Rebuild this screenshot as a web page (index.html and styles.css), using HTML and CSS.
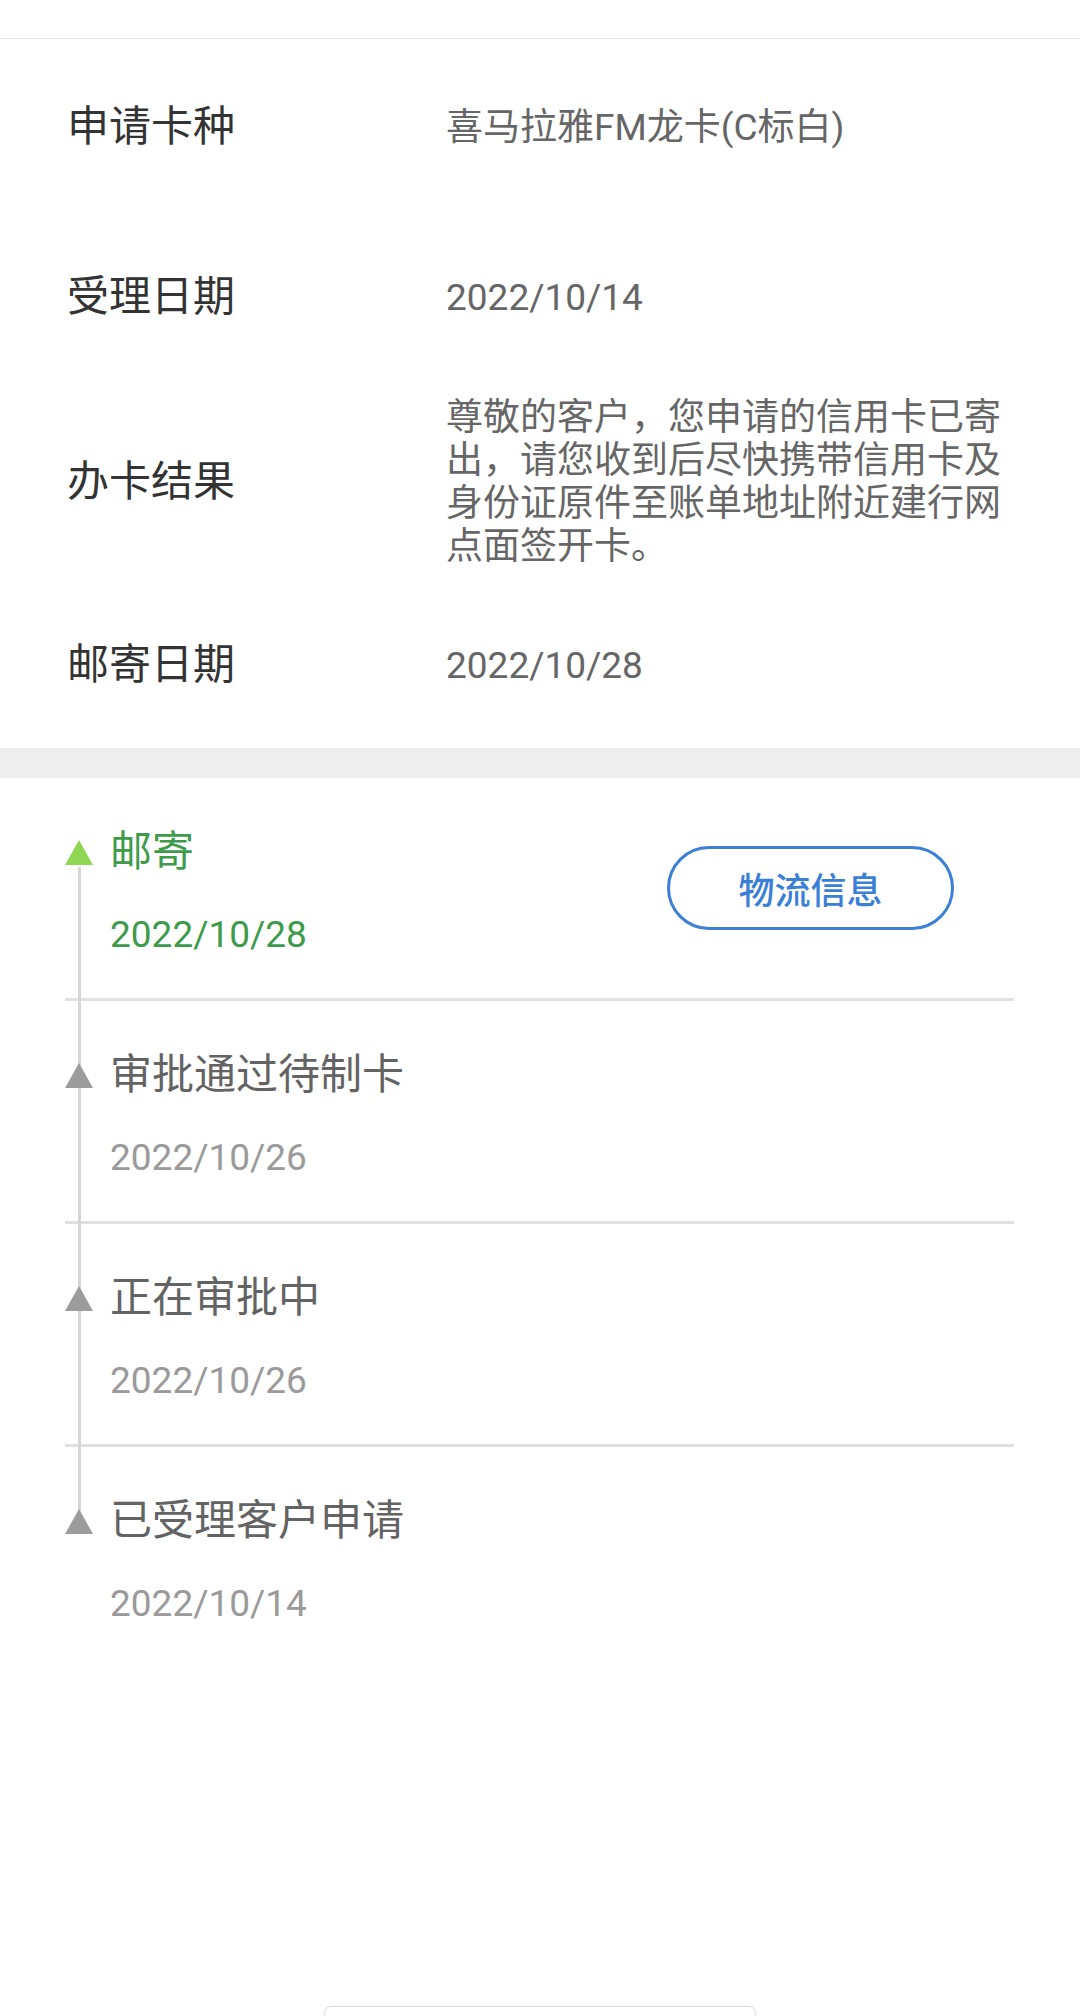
FILE: index.html
```html
<!DOCTYPE html>
<html lang="zh-CN">
<head>
<meta charset="utf-8">
<title>办卡进度</title>
<link rel="stylesheet" href="styles.css">
</head>
<body>
<div class="page">
  <div class="header"></div>

  <section class="info">
    <div class="row">
      <div class="label">申请卡种</div>
      <div class="value">喜马拉雅FM龙卡(C标白)</div>
    </div>
    <div class="row">
      <div class="label">受理日期</div>
      <div class="value">2022/10/14</div>
    </div>
    <div class="row row-multi">
      <div class="label">办卡结果</div>
      <div class="value">尊敬的客户，您申请的信用卡已寄出，请您收到后尽快携带信用卡及身份证原件至账单地址附近建行网点面签开卡。</div>
    </div>
    <div class="row row-last">
      <div class="label">邮寄日期</div>
      <div class="value">2022/10/28</div>
    </div>
  </section>

  <div class="band"></div>

  <section class="timeline">
    <div class="item item-active">
      <div class="step">
        <div class="marker">
          <svg width="28" height="25" viewBox="0 0 28 25"><polygon points="14,0 28,25 0,25" fill="#8fd653"/></svg>
        </div>
        <div class="texts">
          <div class="title">邮寄</div>
          <div class="date">2022/10/28</div>
        </div>
      </div>
      <button class="btn">物流信息</button>
    </div>
    <div class="item">
      <div class="step">
        <div class="marker">
          <svg width="28" height="25" viewBox="0 0 28 25"><polygon points="14,0 28,25 0,25" fill="#9c9c9c"/></svg>
        </div>
        <div class="texts">
          <div class="title">审批通过待制卡</div>
          <div class="date">2022/10/26</div>
        </div>
      </div>
    </div>
    <div class="item">
      <div class="step">
        <div class="marker">
          <svg width="28" height="25" viewBox="0 0 28 25"><polygon points="14,0 28,25 0,25" fill="#9c9c9c"/></svg>
        </div>
        <div class="texts">
          <div class="title">正在审批中</div>
          <div class="date">2022/10/26</div>
        </div>
      </div>
    </div>
    <div class="item item-last">
      <div class="step">
        <div class="marker">
          <svg width="28" height="25" viewBox="0 0 28 25"><polygon points="14,0 28,25 0,25" fill="#9c9c9c"/></svg>
        </div>
        <div class="texts">
          <div class="title">已受理客户申请</div>
          <div class="date">2022/10/14</div>
        </div>
      </div>
    </div>
  </section>

  <div class="spacer"></div>
  <div class="home-bar"></div>
</div>
</body>
</html>
```

FILE: styles.css
```css
* {
  box-sizing: border-box;
}

html, body {
  margin: 0;
  padding: 0;
  background: #ffffff;
}

body {
  font-family: Roboto, "Noto Sans CJK SC", "Noto Sans", sans-serif;
}

.page {
  width: 1080px;
  height: 2016px;
  display: flex;
  flex-direction: column;
  overflow: hidden;
  background: #ffffff;
}

.header {
  height: 39px;
  flex: none;
  border-bottom: 1px solid #e6e6e6;
}

.info {
  flex: none;
  padding-top: 3px;
}

.row {
  display: flex;
  align-items: center;
  height: 170px;
  padding: 0 67px;
}

.row-multi {
  height: 200px;
}

.row-last {
  height: 166px;
}

.label {
  width: 379px;
  flex: none;
  font-size: 42px;
  line-height: 56px;
  color: #333333;
}

.value {
  flex: 1;
  font-size: 37px;
  line-height: 43px;
  color: #666666;
}

.band {
  height: 30px;
  flex: none;
  background: #eeeeee;
}

.timeline {
  position: relative;
  flex: none;
  padding: 0 66px 0 65px;
}

.timeline::before {
  content: "";
  position: absolute;
  left: 78px;
  width: 3px;
  top: 89px;
  bottom: 154px;
  background: #d6d6d6;
}

.item {
  display: flex;
  align-items: center;
  justify-content: space-between;
  height: 223px;
  border-bottom: 3px solid #e0e0e0;
}

.item-last {
  height: 220px;
  border-bottom: none;
}

.step {
  display: flex;
  align-items: flex-start;
  margin-top: 8px;
}

.marker {
  position: relative;
  width: 28px;
  height: 56px;
  margin-right: 17px;
  display: flex;
  align-items: center;
  justify-content: center;
}

.marker svg {
  display: block;
}

.texts {
  display: flex;
  flex-direction: column;
  gap: 30px;
}

.title {
  font-size: 42px;
  line-height: 56px;
  color: #636363;
}

.date {
  font-size: 37px;
  line-height: 50px;
  color: #9a9a9a;
}

.item-active .title,
.item-active .date {
  color: #3e9b4c;
}

.btn {
  width: 287px;
  height: 84px;
  margin-right: 60px;
  border: 3px solid #3b7fd7;
  border-radius: 42px;
  background: #ffffff;
  color: #3b7fd7;
  font-family: Roboto, "Noto Sans CJK SC", sans-serif;
  font-size: 36px;
  font-weight: 500;
  padding: 0;
}

.spacer {
  flex: 1;
}

.home-bar {
  flex: none;
  width: 432px;
  height: 14px;
  margin: 0 auto -4px;
  border: 1px solid #dcdcdc;
  border-radius: 7px;
  background: #ffffff;
  box-shadow: 0 0 3px rgba(0, 0, 0, 0.08);
}
```
